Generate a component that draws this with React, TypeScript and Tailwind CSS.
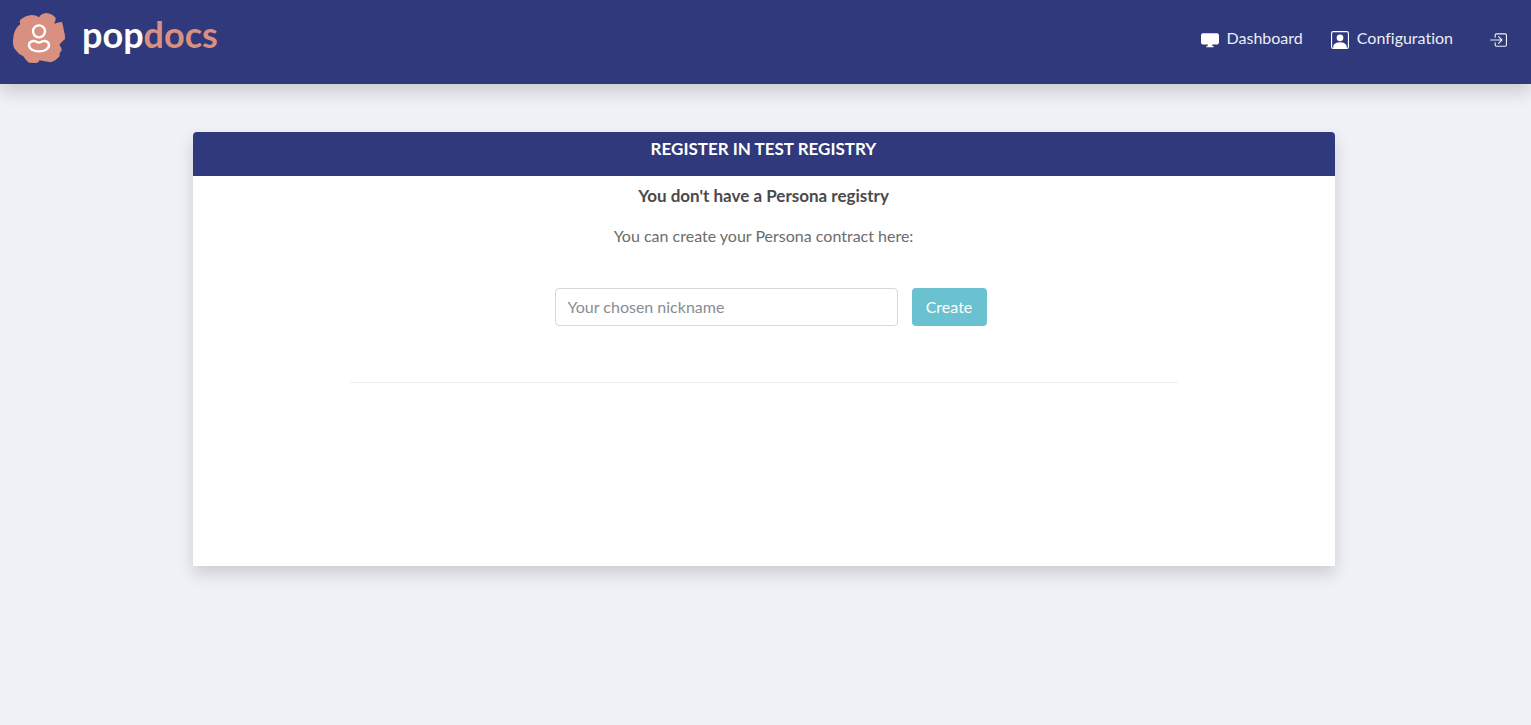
import { BsBoxArrowInRight, BsDisplayFill, BsPersonSquare } from "react-icons/bs";

function LogoMark() {
  return (
    <svg viewBox="36 36 162 156" className="h-13 w-[54px]" aria-hidden="true">
      <path
        fill="#d99080"
        d="M61 72 Q56 62 64 57 Q76 47 94 45 Q108 45 117 52 Q124 40 138 39 Q158 40 167 54 Q168 60 163 71 Q174 66 186 66 Q190 80 192 94 Q196 106 195 117 Q187 124 178 134 Q185 142 185 152 Q177 158 179 168 Q168 182 152 187 Q134 184 118 181 Q117 189 106 189 L87 188 Q76 180 70 169 Q56 163 46 149 Q38 138 39 122 Q39 104 45 92 Q50 80 61 72 Z"
      />
      <g fill="none" stroke="#fff" strokeWidth="7" strokeLinejoin="round">
        <circle cx="117" cy="94" r="18" />
        <path d="M99 123 C107 121 110 128 117 128 C124 128 127 121 135 123 C143 125 147 130 147 135 C147 147 133 154 117 154 C101 154 87 147 87 135 C87 130 91 125 99 123 Z" />
      </g>
    </svg>
  );
}

export default function App() {
  return (
    <div className="min-h-screen bg-[#eff1f6] font-['Lato','Noto_Sans',sans-serif] text-base text-[#6c6c6c] [font-variant-ligatures:none]">
      <header className="flex h-21 items-start justify-between bg-[#2f397b] pr-6 pl-3 text-white shadow-[0_8px_16px_rgba(0,0,0,0.15)]">
        <a href="#" className="mt-3 flex items-start gap-4" aria-label="popdocs">
          <LogoMark />
          <span className="text-[36px] leading-11 font-bold">
            pop<span className="text-[#d99080]">docs</span>
          </span>
        </a>
        <nav className="mt-[26px] flex items-center leading-6 text-[#eceef6]">
          <a href="#" className="flex items-center gap-2">
            <BsDisplayFill className="mt-1 size-[18px] text-white" />
            Dashboard
          </a>
          <a href="#" className="ml-7 flex items-center gap-2">
            <BsPersonSquare className="mt-1 size-[18px] text-white" />
            Configuration
          </a>
          <a href="#" className="ml-9" aria-label="Log in">
            <BsBoxArrowInRight className="mt-1 size-[18px]" />
          </a>
        </nav>
      </header>

      <main className="py-12 pr-5 pl-4">
        <section className="mx-auto w-full max-w-[1142px] rounded-t-sm bg-white pb-[183px] text-center shadow-[0_8px_16px_rgba(0,0,0,0.15)]">
          <h1 className="h-11 rounded-t-sm bg-[#2f397b] pt-[5px] text-[17px] leading-6 font-bold text-white">
            REGISTER IN TEST REGISTRY
          </h1>
          <p className="mt-2 text-[17px] leading-6 font-bold text-[#4a4a4a]">
            You don't have a Persona registry
          </p>
          <p className="mt-4 leading-6">You can create your Persona contract here:</p>
          <form
            className="mt-10 flex items-center justify-center gap-[14px] pl-[14px]"
            onSubmit={(event) => event.preventDefault()}
          >
            <input
              type="text"
              aria-label="Your chosen nickname"
              placeholder="Your chosen nickname"
              className="h-[38px] w-[343px] rounded border border-[#d5d8dc] bg-white px-3 pb-[2px] placeholder:text-[#868e96]"
            />
            <button type="submit" className="h-[38px] w-[75px] rounded bg-[#6ac2d0] text-white">
              Create
            </button>
          </form>
          <hr className="mx-auto mt-14 w-[828px] max-w-full border-[#ededed]" />
        </section>
      </main>
    </div>
  );
}
